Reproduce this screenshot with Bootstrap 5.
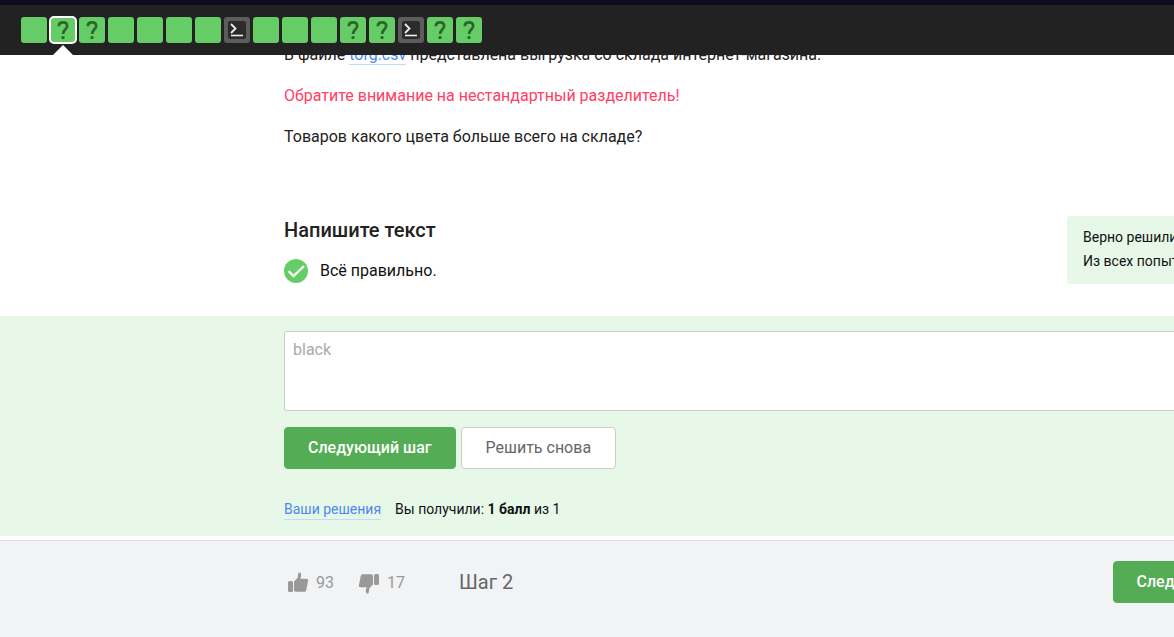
<!DOCTYPE html>
<html lang="ru">
<head>
<meta charset="utf-8">
<meta name="viewport" content="width=device-width, initial-scale=1">
<title>Шаг 2</title>
<link href="https://cdn.jsdelivr.net/npm/bootstrap@5.3.0/dist/css/bootstrap.min.css" rel="stylesheet">
<style>
  body { font-family: Roboto, "Open Sans", sans-serif; font-size: 16px; line-height: 24px; color: #222; background: #f2f3f5; overflow-x: hidden; }
  a { text-decoration: none; color: #4c87f0; border-bottom: 1px solid #bddcf8; }
  .steps-bar { background: #222; border-top: 5px solid #0f0b1c; height: 55px; padding: 12px 21px 0; gap: 3px; }
  .step { position: relative; width: 26px; height: 26px; border: 0; border-radius: 3px; background: #66cc66; color: #2c662c; }
  .step svg { display: block; width: 26px; height: 26px; }
  .step-code { background: #5c5c5c; }
  .step-active { outline: 2px solid #fff; outline-offset: -1px; border-radius: 4px; }
  .step-active::after { content: ""; position: absolute; left: 3px; top: 28px; border: solid transparent; border-width: 0 10px 10px; border-bottom-color: #fff; }
  /* The lesson column runs past the right edge of a narrow window. */
  .lesson { margin-left: 284px; margin-right: -110px; }
  .lesson-text { padding-top: 43px; }
  .lesson-text p { margin-bottom: 17px; }
  .warn { color: #ff4066; }
  .task-head { padding-top: 50px; padding-bottom: 32px; }
  h2 { font-size: 20px; line-height: 28px; font-weight: 500; margin-bottom: 15px; }
  .verdict { gap: 12px; color: #111; }
  .stats { width: 217px; height: 68px; padding: 9px 16px; background: #e7f8e9; border-radius: 4px; font-size: 14px; color: #111; }
  .answer { background: #e7f8e9; padding: 15px 0 16px; }
  .answer textarea { height: 80px; padding: 6px 8px; border: 1px solid #ccc; border-radius: 2px; resize: none; line-height: 24px; font-size: 16px; }
  .answer textarea:disabled { background: #fff; color: #aaa; }
  .actions { margin-top: 16px; gap: 5px; }
  .act { height: 42px; padding: 0 24px; border-radius: 4px; line-height: 24px; white-space: nowrap; --bs-btn-border-color: #ccc; --bs-btn-bg: #fff; --bs-btn-color: #666; }
  .act-go { padding: 0 23px; --bs-btn-border-color: #54ad54; --bs-btn-bg: #54ad54; --bs-btn-color: #fff; font-weight: 500; }
  .score { margin-top: 30px; gap: 14px; font-size: 14px; line-height: 20px; color: #111; }
  .score strong { font-weight: 700; }
  .step-footer { border-top: 1px solid #d8dadb; padding: 20px 0 34px; }
  .vote { border: 0; padding: 2px 0 0; background: none; color: #999; gap: 6px; }
  .vote svg { width: 24px; height: 24px; fill: #999; }
  .votes { padding-left: 2px; gap: 23px; }
  .step-name { font-size: 20px; color: #666; margin-left: 54px; }
</style>
</head>
<body>
<svg class="d-none" aria-hidden="true">
  <symbol id="quiz" viewBox="0 0 26 26"><path d="M8.8 9.3C8.8 6.500 10.500 5.300 13 5.300s4.200 1.400 4.200 3.800c0 3-4.100 3.600-4.100 7.800" fill="none" stroke="currentColor" stroke-width="2.700"/><circle cx="13" cy="20.600" r="1.700" fill="currentColor"/></symbol>
  <symbol id="code" viewBox="0 0 26 26"><rect x="4" y="4" width="18" height="18" rx="2.500" fill="#2b2b2b"/><path d="M7 7l4.500 4.500L7 16" fill="none" stroke="#eee" stroke-width="1.800"/><path d="M7 18.500h12" stroke="#eee" stroke-width="1.600"/></symbol>
  <symbol id="thumb" viewBox="0 0 24 24"><rect x="2" y="10" width="5" height="11" rx="1.500"/><path d="M8 10.500L11.500 7 12.300 2.500C12.500 1 14.900 .9 15.200 3.500 15.400 5 14.800 6.500 14.300 7.800H20.500C22 7.800 22.400 9 22 10L20.300 19C20 20.300 19 20.800 18 20.800H10.500C9 20.800 8 20.200 8 19Z"/></symbol>
</svg>
<nav class="steps-bar d-flex fixed-top" aria-label="Шаги урока">
  <button class="step p-0" type="button" aria-label="1"></button>
  <button class="step step-active p-0" type="button" aria-label="2"><svg><use href="#quiz"/></svg></button>
  <button class="step p-0" type="button" aria-label="3"><svg><use href="#quiz"/></svg></button>
  <button class="step p-0" type="button" aria-label="4"></button>
  <button class="step p-0" type="button" aria-label="5"></button>
  <button class="step p-0" type="button" aria-label="6"></button>
  <button class="step p-0" type="button" aria-label="7"></button>
  <button class="step step-code p-0" type="button" aria-label="8"><svg><use href="#code"/></svg></button>
  <button class="step p-0" type="button" aria-label="9"></button>
  <button class="step p-0" type="button" aria-label="10"></button>
  <button class="step p-0" type="button" aria-label="11"></button>
  <button class="step p-0" type="button" aria-label="12"><svg><use href="#quiz"/></svg></button>
  <button class="step p-0" type="button" aria-label="13"><svg><use href="#quiz"/></svg></button>
  <button class="step step-code p-0" type="button" aria-label="14"><svg><use href="#code"/></svg></button>
  <button class="step p-0" type="button" aria-label="15"><svg><use href="#quiz"/></svg></button>
  <button class="step p-0" type="button" aria-label="16"><svg><use href="#quiz"/></svg></button>
</nav>
<main class="bg-white pb-1 overflow-hidden">
  <div class="lesson lesson-text">
    <p>В файле <a href="#">torg.csv</a> представлена выгрузка со склада интернет-магазина.</p>
    <p class="warn">Обратите внимание на нестандартный разделитель!</p>
    <p>Товаров какого цвета больше всего на складе?</p>
  </div>
  <div class="lesson task-head d-flex justify-content-between align-items-start">
    <div>
      <h2>Напишите текст</h2>
      <div class="verdict d-flex align-items-center">
        <svg width="24" height="24" viewBox="0 0 24 24" aria-hidden="true"><circle cx="12" cy="12" r="12" fill="#66cc66"/><path d="M4.500 12l5 5L20 7" fill="none" stroke="#fff" stroke-width="2.400"/></svg>
        <span>Всё правильно.</span>
      </div>
    </div>
    <div class="stats text-nowrap">Верно решили учащихся<br>Из всех попыток верных</div>
  </div>
  <section class="answer">
    <div class="lesson">
      <textarea class="form-control" aria-label="Напишите текст" disabled>black</textarea>
      <div class="actions d-flex">
        <button class="btn act act-go" type="button">Следующий шаг</button>
        <button class="btn act" type="button">Решить снова</button>
      </div>
      <div class="score d-flex">
        <a href="#">Ваши решения</a>
        <span>Вы получили: <strong>1 балл</strong> из 1</span>
      </div>
    </div>
  </section>
</main>
<footer class="step-footer overflow-hidden">
  <div class="lesson d-flex align-items-center">
    <div class="votes d-flex">
      <button class="vote d-flex" type="button"><svg aria-hidden="true"><use href="#thumb"/></svg>93</button>
      <button class="vote d-flex" type="button"><svg aria-hidden="true"><use href="#thumb" transform="rotate(180 12 12)"/></svg>17</button>
    </div>
    <span class="step-name">Шаг 2</span>
    <button class="btn act act-go ms-auto" type="button">Следующий шаг</button>
  </div>
</footer>
<script src="https://cdn.jsdelivr.net/npm/bootstrap@5.3.0/dist/js/bootstrap.bundle.min.js"></script>
</body>
</html>
